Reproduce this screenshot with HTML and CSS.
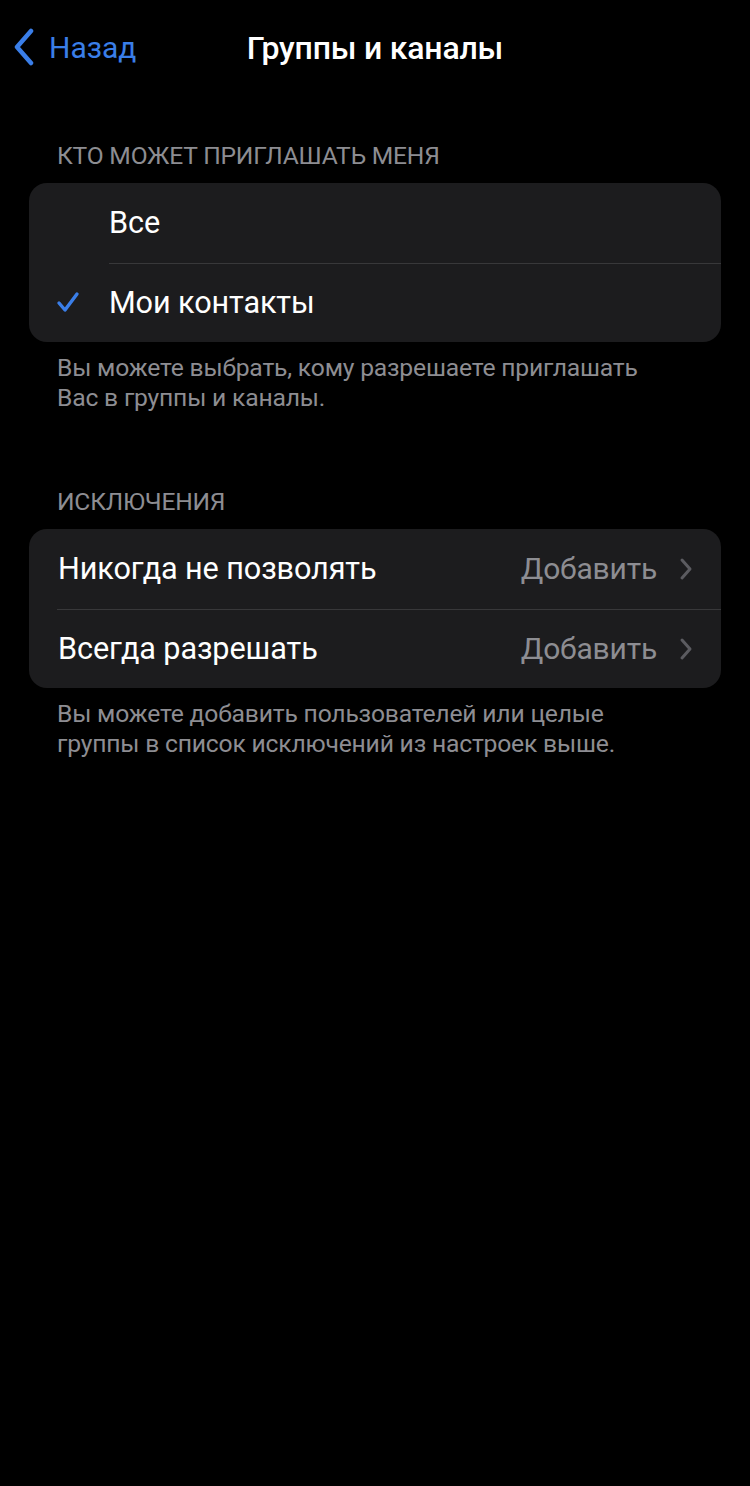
FILE: index.html
```html
<!DOCTYPE html>
<html lang="ru">
<head>
    <meta charset="UTF-8">
    <meta name="viewport" content="width=device-width, initial-scale=1.0">
    <title>Группы и каналы</title>
    <link rel="stylesheet" href="styles.css">
</head>
<body>
    <div class="navbar">
        <a class="back" href="#">
            <svg class="back-icon" width="24" height="38" viewBox="0 0 24 38">
                <path d="M19 3 L5 19 L19 35" fill="none" stroke="#3a7ee8" stroke-width="4.5" stroke-linecap="round" stroke-linejoin="round"/>
            </svg>
            <span>Назад</span>
        </a>
        <h1 class="title">Группы и каналы</h1>
    </div>

    <div class="section">
        <div class="section-header">КТО МОЖЕТ ПРИГЛАШАТЬ МЕНЯ</div>
        <div class="card">
            <div class="row option">
                <span class="check"></span>
                <div class="row-body"><span class="label">Все</span></div>
            </div>
            <div class="row option">
                <span class="check">
                    <svg width="24" height="22" viewBox="0 0 24 22">
                        <path d="M3 12 L9 19 L21 3" fill="none" stroke="#3a7ee8" stroke-width="3.4" stroke-linecap="round" stroke-linejoin="round"/>
                    </svg>
                </span>
                <div class="row-body"><span class="label">Мои контакты</span></div>
            </div>
        </div>
        <div class="section-footer">Вы можете выбрать, кому разрешаете приглашать<br>Вас в группы и каналы.</div>
    </div>

    <div class="section">
        <div class="section-header">ИСКЛЮЧЕНИЯ</div>
        <div class="card">
            <div class="row link">
                <div class="row-body">
                    <span class="label">Никогда не позволять</span>
                    <span class="value">Добавить</span>
                    <svg class="chevron" width="14" height="24" viewBox="0 0 14 24">
                        <path d="M3 3 L11 12 L3 21" fill="none" stroke="#5b5b60" stroke-width="3" stroke-linecap="round" stroke-linejoin="round"/>
                    </svg>
                </div>
            </div>
            <div class="row link">
                <div class="row-body">
                    <span class="label">Всегда разрешать</span>
                    <span class="value">Добавить</span>
                    <svg class="chevron" width="14" height="24" viewBox="0 0 14 24">
                        <path d="M3 3 L11 12 L3 21" fill="none" stroke="#5b5b60" stroke-width="3" stroke-linecap="round" stroke-linejoin="round"/>
                    </svg>
                </div>
            </div>
        </div>
        <div class="section-footer">Вы можете добавить пользователей или целые<br>группы в список исключений из настроек выше.</div>
    </div>
</body>
</html>
```

FILE: styles.css
```css
body {
    margin: 0;
    padding: 0;
    background: #000;
    color: #fff;
    font-family: Roboto, "Noto Sans", sans-serif;
    width: 750px;
    min-height: 1486px;
}

/* top bar */
.navbar {
    position: relative;
    height: 96px;
    display: flex;
    align-items: center;
    justify-content: center;
}
.back {
    position: absolute;
    left: 12px;
    top: 28px;
    display: flex;
    align-items: center;
    gap: 13px;
    color: #3a7ee8;
    text-decoration: none;
    font-size: 30px;
}
.title {
    margin: 0;
    font-size: 32px;
    font-weight: 500;
    letter-spacing: -0.2px;
}

.section {
    padding: 0 29px;
    margin-top: 45px;
}
.section + .section {
    margin-top: 74px;
}

.section-header {
    color: #8d8d92;
    font-size: 24.6px;
    padding: 0 28px;
    margin-bottom: 13px;
    letter-spacing: -0.2px;
}

.card {
    background: #1c1c1e;
    border-radius: 18px;
    overflow: hidden;
}

.row {
    display: flex;
    height: 79.5px;
}
.row-body {
    flex: 1;
    display: flex;
    align-items: center;
    padding-right: 28px;
}
.row + .row .row-body {
    border-top: 1px solid #38383a;
}

.option .check {
    width: 80px;
    display: flex;
    align-items: center;
    justify-content: flex-start;
    padding-left: 27px;
    box-sizing: border-box;
}
.link {
    padding-left: 29px;
}
.link + .link {
    padding-left: 28px;
}
.link + .link .row-body {
    padding-left: 1px;
}

.label {
    font-size: 30.6px;
    letter-spacing: -0.1px;
}
.value {
    margin-left: auto;
    color: #8d8d92;
    font-size: 30px;
    letter-spacing: -0.2px;
}
.chevron {
    margin-left: 22px;
}

.section-footer {
    color: #8d8d92;
    font-size: 24.7px;
    line-height: 30px;
    padding: 11px 28px 0;
    letter-spacing: -0.2px;
}
```
